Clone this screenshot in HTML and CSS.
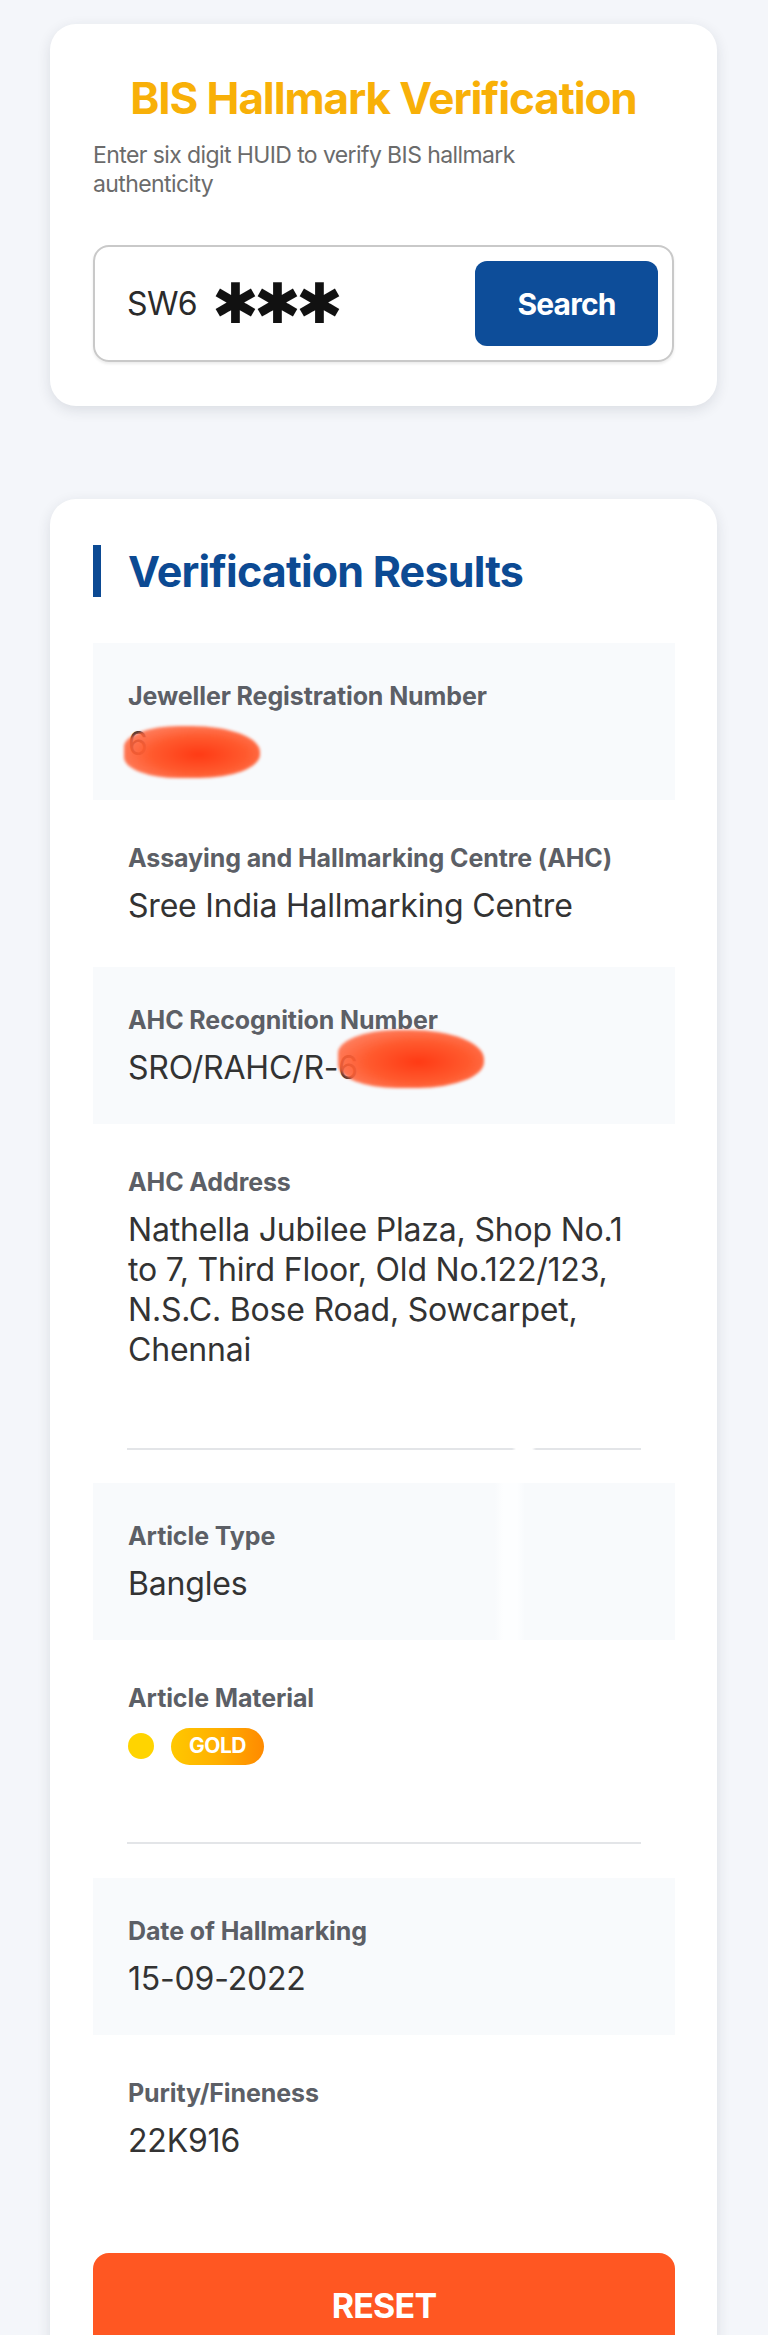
FILE: index.html
```html
<!DOCTYPE html>
<html lang="en">
<head>
<meta charset="utf-8">
<title>BIS Hallmark Verification</title>
<link rel="stylesheet" href="styles.css">
</head>
<body>
<div class="page">
  <section class="card search-card">
    <h1 class="title">BIS Hallmark Verification</h1>
    <p class="subtitle">Enter six digit HUID to verify BIS hallmark authenticity</p>
    <div class="search-box">
      <div class="huid"><span class="huid-text">SW6</span><span class="stars">✱✱✱</span></div>
      <button class="search-btn">Search</button>
    </div>
  </section>

  <section class="card results-card">
    <div class="results-head">
      <span class="bar"></span>
      <h2 class="results-title">Verification Results</h2>
    </div>

    <div class="fields">
      <div class="field shade">
        <div class="label">Jeweller Registration Number</div>
        <div class="value"><span class="redacted r1">6</span></div>
      </div>
      <div class="field">
        <div class="label">Assaying and Hallmarking Centre (AHC)</div>
        <div class="value">Sree India Hallmarking Centre</div>
      </div>
      <div class="field shade">
        <div class="label">AHC Recognition Number</div>
        <div class="value">SRO/RAHC/R-<span class="redacted r2">6</span></div>
      </div>
      <div class="field">
        <div class="label">AHC Address</div>
        <div class="value">Nathella Jubilee Plaza, Shop No.1<br>to 7, Third Floor, Old No.122/123,<br>N.S.C. Bose Road, Sowcarpet,<br>Chennai</div>
      </div>
    </div>

    <div class="divider gap-line"></div>

    <div class="fields">
      <div class="field shade split">
        <div class="label">Article Type</div>
        <div class="value">Bangles</div>
      </div>
      <div class="field">
        <div class="label">Article Material</div>
        <div class="value material"><span class="dot"></span><span class="pill">GOLD</span></div>
      </div>
    </div>

    <div class="divider"></div>

    <div class="fields">
      <div class="field shade">
        <div class="label">Date of Hallmarking</div>
        <div class="value">15-09-2022</div>
      </div>
      <div class="field">
        <div class="label">Purity/Fineness</div>
        <div class="value">22K916</div>
      </div>
    </div>

    <button class="reset-btn">RESET</button>
  </section>
</div>
</body>
</html>
```

FILE: styles.css
```css
* { box-sizing: border-box; }
html, body { margin: 0; padding: 0; }
body {
  background: #f4f6fa;
  font-family: Inter, "Noto Sans", "DejaVu Sans", sans-serif;
  color: #333;
}
.page {
  padding: 24px 51px 40px 50px;
  display: flex;
  flex-direction: column;
  gap: 93px;
}
.card {
  background: #fff;
  border-radius: 26px;
  box-shadow: 0 4px 14px rgba(30, 40, 60, 0.12);
}
.search-card {
  padding: 49px 43px 44px 43px;
}
.title {
  margin: 0;
  text-align: center;
  font-size: 44px;
  line-height: 50px;
  font-weight: 700;
  color: #f8b008;
  letter-spacing: -1.1px;
}
.subtitle {
  margin: 18px 0 0 0;
  max-width: 480px;
  font-size: 23px;
  line-height: 29px;
  color: #6b6b6b;
  letter-spacing: -0.6px;
}
.search-box {
  margin-top: 46px;
  height: 117px;
  border: 2px solid #c9c9c9;
  border-radius: 16px;
  display: flex;
  align-items: center;
  justify-content: space-between;
  padding: 0 14px 0 32px;
  box-shadow: 0 2px 3px rgba(0,0,0,0.08);
}
.huid {
  display: flex;
  align-items: center;
  gap: 15px;
}
.huid-text {
  font-size: 32px;
  color: #2b2b2b;
  letter-spacing: -0.6px;
}
.stars {
  font-family: "DejaVu Sans", sans-serif;
  font-size: 56px;
  line-height: 56px;
  font-weight: 700;
  color: #111;
  letter-spacing: -5px;
}
.search-btn {
  width: 183px;
  height: 85px;
  border: 0;
  border-radius: 12px;
  background: #0d4d99;
  color: #fff;
  font-family: Inter, sans-serif;
  font-weight: 700;
  font-size: 30px;
  letter-spacing: -0.8px;
}
.results-card {
  padding: 46px 42px 60px 43px;
}
.results-head {
  display: flex;
  align-items: center;
  gap: 27px;
}
.bar {
  width: 8px;
  height: 52px;
  background: #0c4a93;
}
.results-title {
  margin: 0;
  font-size: 43px;
  line-height: 52px;
  font-weight: 700;
  color: #0c4a93;
  letter-spacing: -0.8px;
}
.fields {
  display: flex;
  flex-direction: column;
  gap: 5px;
}
.results-head + .fields { margin-top: 46px; }
.field {
  padding: 38px 35px 36px 35px;
}
.field.shade { background: #f8fafc; }
.field.split {
  background: linear-gradient(90deg, #f8fafc 0, #f8fafc 402px, #fdfeff 410px, #fdfeff 424px, #f8fafc 432px);
}
.label {
  font-size: 25px;
  line-height: 30px;
  font-weight: 700;
  color: #5c5f66;
  letter-spacing: -0.1px;
}
.value {
  margin-top: 13px;
  font-size: 32px;
  line-height: 40px;
  color: #333;
  letter-spacing: -0.2px;
}
.redacted {
  display: inline-block;
  position: relative;
  color: #333;
}
.redacted::after {
  content: "";
  position: absolute;
  border-radius: 40% 50% 45% 40%;
  background: radial-gradient(ellipse at 55% 55%, #ff3a14 0, #ff5a2e 45%, rgba(255,100,60,0.85) 75%, rgba(255,120,80,0) 100%);
  filter: blur(1.5px);
}
.r1::after { left: -4px; top: 2px; width: 136px; height: 52px; }
.r2::after { left: 0; top: -18px; width: 146px; height: 58px; }
.divider {
  height: 2px;
  background: #e3e5e8;
  margin: 40px 34px 34px 34px;
}
.divider.gap-line {
  margin: 42px 34px 33px 34px;
  background: linear-gradient(90deg, #e3e5e8 0, #e3e5e8 385px, #fff 389px, #fff 405px, #e3e5e8 409px);
}
.material {
  display: flex;
  align-items: center;
  gap: 17px;
  height: 40px;
}
.dot {
  width: 26px;
  height: 26px;
  border-radius: 50%;
  background: #ffd400;
}
.pill {
  display: inline-flex;
  align-items: center;
  justify-content: center;
  width: 93px;
  height: 37px;
  border-radius: 19px;
  background: linear-gradient(90deg, #ffc800 0%, #ffb000 50%, #ff8a00 100%);
  color: #fff;
  font-weight: 700;
  font-size: 21px;
  letter-spacing: -0.5px;
}
.reset-btn {
  display: block;
  width: 100%;
  margin-top: 56px;
  height: 104px;
  border: 0;
  border-radius: 16px;
  background: #ff5722;
  color: #fff;
  font-family: Inter, sans-serif;
  font-weight: 700;
  font-size: 34px;
  letter-spacing: -0.8px;
}
```
